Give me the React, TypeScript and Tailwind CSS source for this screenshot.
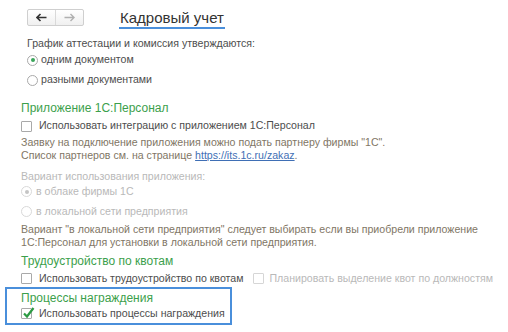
import React from "react";

const font = { fontFamily: '"Liberation Sans", Arial, sans-serif' };

function Radio({ checked, disabled }: { checked?: boolean; disabled?: boolean }) {
  return (
    <span
      className={
        "flex w-[11px] h-[11px] rounded-full border bg-white items-center justify-center shrink-0 " +
        (disabled ? "border-[#d9d9d9]" : "border-[#a9a9a9]")
      }
    >
      {checked && (
        <span
          className={
            "w-[4px] h-[4px] rounded-full " + (disabled ? "bg-[#c4c4c4]" : "bg-[#3aa55a]")
          }
        ></span>
      )}
    </span>
  );
}

function Checkbox({ checked, disabled }: { checked?: boolean; disabled?: boolean }) {
  return (
    <span
      className={
        "relative flex w-[11px] h-[11px] border bg-white shrink-0 rounded-[1px] " +
        (disabled ? "border-[#d6d6d6]" : "border-[#a9a9a9]")
      }
    >
      {checked && (
        <svg
          className="absolute left-[0px] top-[-3px]"
          width="13"
          height="13"
          viewBox="0 0 13 13"
        >
          <path d="M2 7.5 L5 10.5 L11.5 2" fill="none" stroke="#2c9a43" strokeWidth="2.2" />
        </svg>
      )}
    </span>
  );
}

export default function App() {
  return (
    <div
      className="w-[508px] h-[332px] bg-white overflow-hidden text-[10.6px] text-[#4d4d4d] whitespace-nowrap"
      style={font}
    >
      {/* header */}
      <div className="flex items-start h-[31px] pl-[27px] pt-[9px]">
        <div className="flex w-[57px] h-[17px] border border-[#cfcfcf] rounded-[2px] bg-gradient-to-b from-white to-[#f0f0f0]">
          <div className="flex-1 flex items-center justify-center border-r border-[#d9d9d9]">
            <svg width="11" height="9" viewBox="0 0 11 9">
              <path d="M1 4.5 H10.5 M4.5 1 L1 4.5 L4.5 8" fill="none" stroke="#333" strokeWidth="1.6" />
            </svg>
          </div>
          <div className="flex-1 flex items-center justify-center">
            <svg width="11" height="9" viewBox="0 0 11 9">
              <path d="M0.5 4.5 H10 M6.5 1 L10 4.5 L6.5 8" fill="none" stroke="#b0b0b0" strokeWidth="1.4" />
            </svg>
          </div>
        </div>
        <div className="ml-[35px] mt-[0px] text-[15px] leading-[17px] text-[#333] pb-[1px] border-b-2 border-[#4a8fdb] px-[1px]">
          Кадровый учет
        </div>
      </div>

      {/* attestation */}
      <div className="pl-[27px] mt-[5px]">
        <div className="h-[14px] leading-[14px]">График аттестации и комиссия утверждаются:</div>
        <div className="flex items-center gap-[3px] h-[16px] mt-[2px]">
          <Radio checked />
          <span>одним документом</span>
        </div>
        <div className="flex items-center gap-[3px] h-[16px] mt-[4px]">
          <Radio />
          <span>разными документами</span>
        </div>
      </div>

      {/* 1C:Personal */}
      <div className="pl-[21px] mt-[13px]">
        <div className="h-[15px] leading-[15px] text-[12px] text-[#3c9f4c]">Приложение 1С:Персонал</div>
        <div className="flex items-center gap-[7px] h-[16px] mt-[2px]">
          <Checkbox />
          <span>Использовать интеграцию с приложением 1С:Персонал</span>
        </div>
        <div className="mt-[1.5px] leading-[13px] text-[#7f7665]">
          <div>Заявку на подключение приложения можно подать партнеру фирмы "1С".</div>
          <div>
            Список партнеров см. на странице{" "}
            <span className="text-[#3f6fb5] underline">https://its.1c.ru/zakaz</span>.
          </div>
        </div>
        <div className="h-[14px] leading-[14px] mt-[7px] text-[#b9b9b9]">Вариант использования приложения:</div>
        <div className="flex items-center gap-[4px] h-[16px] mt-[1px] text-[#b9b9b9]">
          <Radio checked disabled />
          <span>в облаке фирмы 1С</span>
        </div>
        <div className="flex items-center gap-[4px] h-[16px] mt-[4px] text-[#b9b9b9]">
          <Radio disabled />
          <span>в локальной сети предприятия</span>
        </div>
        <div className="mt-[3px] leading-[13px] text-[#7f7665]">
          <div>Вариант "в локальной сети предприятия" следует выбирать если вы приобрели приложение</div>
          <div>1С:Персонал для установки в локальной сети предприятия.</div>
        </div>
      </div>

      {/* quotas */}
      <div className="pl-[21px] mt-[5px]">
        <div className="h-[15px] leading-[15px] text-[12px] text-[#3c9f4c]">Трудоустройство по квотам</div>
        <div className="flex items-center h-[16px] mt-[2px]">
          <Checkbox />
          <span className="ml-[7px]">Использовать трудоустройство по квотам</span>
          <span className="ml-[10px]">
            <Checkbox disabled />
          </span>
          <span className="ml-[5px] text-[#b9b9b9]">Планировать выделение квот по должностям</span>
        </div>
      </div>

      {/* rewards */}
      <div className="ml-[5px] mt-[0px] w-[227px] h-[38px] border-2 border-[#4a8fdb] pl-[14px] pt-[2px]">
        <div className="h-[15px] leading-[15px] text-[12px] text-[#3c9f4c]">Процессы награждения</div>
        <div className="flex items-center gap-[7px] h-[16px]">
          <Checkbox checked />
          <span>Использовать процессы награждения</span>
        </div>
      </div>
    </div>
  );
}
